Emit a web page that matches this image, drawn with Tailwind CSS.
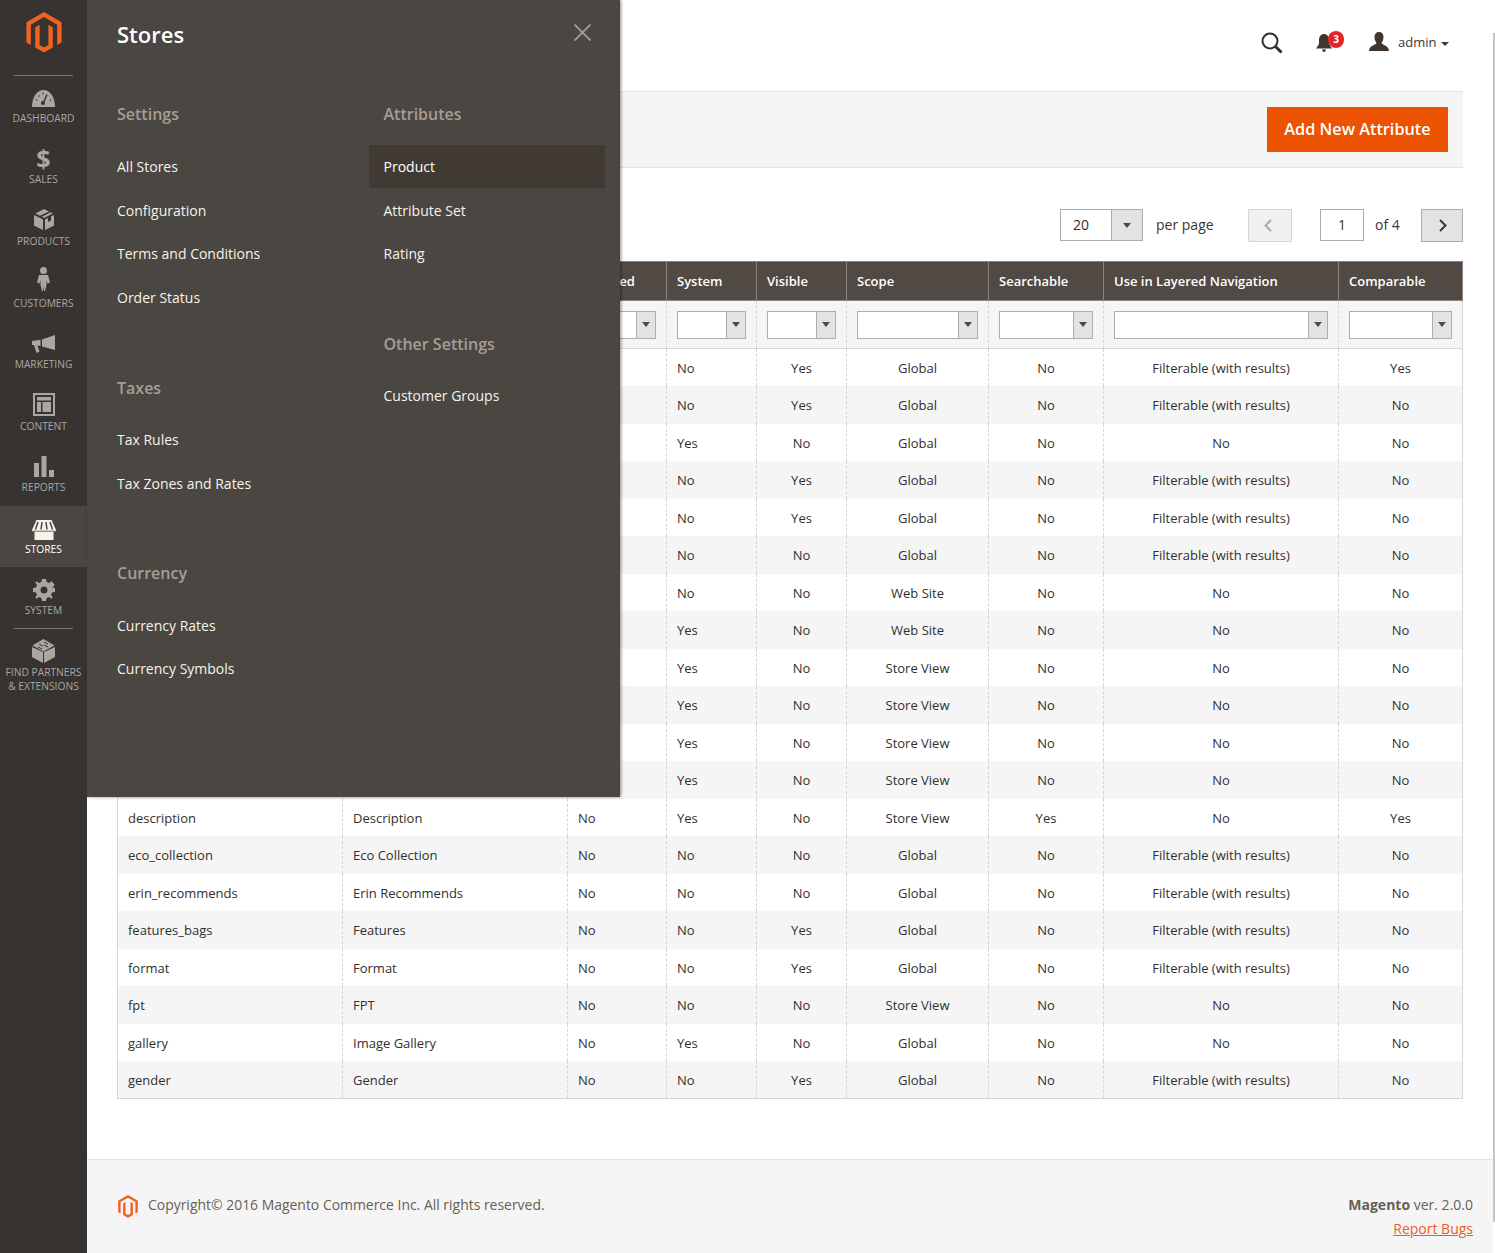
<!DOCTYPE html>
<html lang="en">
<head>
  <meta charset="UTF-8">
  <title>Product Attributes</title>
  <script src="https://cdn.jsdelivr.net/npm/@tailwindcss/browser@4"></script>
</head>
<body class="relative flex w-[1495px] h-[1253px] overflow-hidden bg-white text-[#303030] font-['Open_Sans',sans-serif]">

  <!-- Sidebar -->
  <nav class="w-[87px] shrink-0 bg-[#373330] text-[10.25px] leading-[14px] uppercase text-[#aaa6a0] text-center">
    <div class="h-[75px] flex justify-center pt-[12px]">
      <svg class="w-[36px] h-[41px]" viewBox="0 0 36 42" fill="#f26322"><path d="M18 0L36 10.4V31.2L31.5 33.8V13L18 5.2L4.5 13V33.8L0 31.2V10.4Z"/><path d="M18 41.6L9 36.4V15.6L13.5 13V33.8L18 36.4L22.5 33.8V13L27 15.6V36.4Z"/></svg>
    </div>
    <div class="h-px mx-[14px] bg-[#7d7873]"></div>
    <a class="flex flex-col items-center h-[61.2px]">
      <div class="h-[28px] mt-[7px] flex items-center"><svg class="w-[23px] h-[17px] mt-[2px]" viewBox="0 0 23 17" fill="currentColor"><path d="M0 17C0 7 5 0 11.500 0S23 7 23 17Z"/><path d="M15 4.500L11.500 12.500" stroke="#373330" stroke-width="1.500"/><circle cx="11" cy="13" r="2" fill="#373330"/><circle cx="4.500" cy="10" r="0.800" fill="#373330"/><circle cx="7" cy="6" r="0.800" fill="#373330"/><circle cx="11" cy="3.500" r="0.800" fill="#373330"/><circle cx="18.500" cy="10" r="0.800" fill="#373330"/></svg></div>
      <span>Dashboard</span>
    </a>
    <a class="flex flex-col items-center h-[61.4px]">
      <div class="h-[28px] mt-[7px] flex items-center font-bold text-[25px] leading-none">$</div>
      <span>Sales</span>
    </a>
    <a class="flex flex-col items-center h-[61.4px]">
      <div class="h-[28px] mt-[7px] flex items-center"><svg class="w-[20px] h-[21px]" viewBox="0 0 20 21" fill="currentColor"><path d="M10 0L15 2.400L6 6.800L1.500 4.500Z"/><path d="M16.800 3.300L18.800 4.500L10 9L7.800 7.800Z"/><path d="M0 6L9 10.500V21L0 16.500Z"/><path d="M20 6V16.500L11 21V10.500L14 9V13L17 11.500V7.500Z"/></svg></div>
      <span>Products</span>
    </a>
    <a class="flex flex-col items-center h-[61.4px]">
      <div class="h-[28px] mt-[8px] flex items-center"><svg class="w-[13px] h-[24px] -mt-[6px]" viewBox="0 0 13 24" fill="currentColor"><circle cx="6.500" cy="3.500" r="3.500"/><path d="M2 8H11L13 15.500L10.500 16.500L9.500 13V18L8 24H7L6.500 19L6 24H5L3.500 18V13L2.500 16.500L0 15.500Z"/></svg></div>
      <span>Customers</span>
    </a>
    <a class="flex flex-col items-center h-[61.4px]">
      <div class="h-[28px] mt-[8px] flex items-center"><svg class="w-[23px] h-[18px] mt-[2px]" viewBox="0 0 23 18" fill="currentColor"><path d="M23 0V15L10 11.500V4.500Z"/><path d="M0 6L8.500 4.800V11L5.500 10.600L7.500 16.500L4.500 18L2 10H0Z"/></svg></div>
      <span>Marketing</span>
    </a>
    <a class="flex flex-col items-center h-[61.4px]">
      <div class="h-[28px] mt-[8px] flex items-center"><svg class="w-[22px] h-[23px]" viewBox="0 0 22 23" fill="currentColor"><path fill-rule="evenodd" d="M0 0H22V23H0ZM2 2V21H20V2Z"/><path d="M4 4H18V7.500H4Z"/><path d="M4 9H8V19H4Z"/><path d="M9.500 9H18V19H9.500Z"/></svg></div>
      <span>Content</span>
    </a>
    <a class="flex flex-col items-center h-[61.4px]">
      <div class="h-[28px] mt-[8px] flex items-center"><svg class="w-[20px] h-[21px]" viewBox="0 0 20 21" fill="currentColor"><path d="M0 7H5V21H0Z"/><path d="M7.500 0H12.500V21H7.500Z"/><path d="M15 14H20V21H15Z"/></svg></div>
      <span>Reports</span>
    </a>
    <a class="flex flex-col items-center h-[61.4px] bg-[#4a4641] text-white">
      <div class="h-[28px] mt-[8px] flex items-center"><svg class="w-[24px] h-[20px] mt-[5px]" viewBox="0 0 24 20" fill="#f7f3eb"><path d="M4.500 0H19.500L24 10C24 11.500 22.500 12 21.500 11.500V20H2.500V11.500C1.500 12 0 11.500 0 10Z"/><path d="M6 2L3.500 9.500M10 2L9 9.500M14 2L15 9.500M18 2L20.500 9.500" stroke="#4a4641" stroke-width="1.500"/><path d="M1 11.200H23" stroke="#4a4641" stroke-width="0.800"/></svg></div>
      <span>Stores</span>
    </a>
    <a class="flex flex-col items-center h-[61.2px]">
      <div class="h-[28px] mt-[8px] flex items-center"><svg class="w-[22px] h-[22px] mt-[2px]" viewBox="0 0 22 22" fill="currentColor"><path fill-rule="evenodd" d="M9 0H13L13.600 3L16 4L18.600 2.300L19.700 3.400L21.700 5.400L20 8L19 8.400L22 9V13L19 13.600L18 16L19.700 18.600L18.600 19.700L16 18L13.600 19L13 22H9L8.400 19L6 18L3.400 19.700L2.300 18.600L4 16L3 13.600L0 13V9L3 8.400L4 6L2.300 3.400L3.400 2.300L6 4L8.400 3ZM11 7.500A3.500 3.500 0 1 0 11 14.500A3.500 3.500 0 1 0 11 7.500Z"/></svg></div>
      <span>System</span>
    </a>
    <div class="h-px mx-[14px] bg-[#7d7873]"></div>
    <a class="flex flex-col items-center">
      <div class="h-[28px] mt-[8px] flex items-center"><svg class="w-[23px] h-[24px]" viewBox="0 0 23 24" fill="currentColor"><path d="M0 8V18L11 24V13Z"/><path d="M23 8V18L12 24V13Z"/><path d="M11.500 0L22.500 6.500L11.500 12.500L0.500 6.500Z"/><path d="M7 5L11 7M12 3L16 5M6 8L10 10M12 6L16 8" stroke="#373330" stroke-width="1"/></svg></div>
      <span class="whitespace-nowrap">Find Partners</span>
      <span class="whitespace-nowrap">&amp; Extensions</span>
    </a>
  </nav>

  <!-- Main column -->
  <div class="flex-1 min-w-0 flex flex-col">
    <div class="flex-1 pl-[30px] pr-[32px]">
      <header class="relative h-[92px] border-b border-[#e3e3e3] text-[13px] text-[#41362f]">
        <svg class="absolute left-[1144px] top-[32px] w-[22px] h-[22px]" viewBox="0 0 22 22" fill="none" stroke="#303030" stroke-width="2"><circle cx="9" cy="9" r="7.500"/><path d="M14.500 14.500L20.500 20.500" stroke-width="3"/></svg>
        <svg class="absolute left-[1199px] top-[34px] w-[16px] h-[18px]" viewBox="0 0 16 18" fill="#41362f"><path d="M8 0C11 0 13 2.500 13 6V10L16 14.500H0L3 10V6C3 2.500 5 0 8 0Z"/><path d="M6 15.500H10C10 17 9 18 8 18S6 17 6 15.500Z"/></svg>
        <span class="absolute left-[1211px] top-[31px] w-[16px] h-[17px] rounded-full bg-[#e22626] text-white text-[10px] font-bold leading-[17px] text-center">3</span>
        <svg class="absolute left-[1252px] top-[32px] w-[20px] h-[19px]" viewBox="0 0 20 19" fill="#41362f"><path d="M10 0C13 0 14.500 2 14.500 5C14.500 7.500 13.500 9.500 12.500 11C13 13 20 13.500 20 19H0C0 13.500 7 13 7.500 11C6.500 9.500 5.500 7.500 5.500 5C5.500 2 7 0 10 0Z"/></svg>
        <span class="absolute left-[1281px] top-[32px] text-[13px] leading-[20px]">admin</span>
        <span class="absolute left-[1324px] top-[42px] w-0 h-0 border-x-[4px] border-x-transparent border-t-[4px] border-t-[#41362f]"></span>
      </header>

      <div class="h-[76px] bg-[#f5f5f5] border-b border-[#e3e3e3] flex items-start justify-end pr-[15px] pt-[15px]">
        <button class="h-[45px] w-[181px] pb-[1px] bg-[#eb5202] text-white text-[16.3px] font-semibold">Add New Attribute</button>
      </div>

      <!-- Pager -->
      <div class="h-[93px] pt-[41px] flex items-start justify-end text-[14px] text-[#41362f]">
        <div class="flex w-[83px] h-[32px] border border-[#adadad]">
          <span class="w-[50px] pl-[12px] leading-[30px] text-[#303030]">20</span>
          <span class="flex-1 bg-[#e3e3e3] border-l border-[#adadad] flex items-center justify-center"><i class="w-0 h-0 border-x-[4px] border-x-transparent border-t-[5px] border-t-[#514943]"></i></span>
        </div>
        <span class="ml-[13px] w-[92px] leading-[32px]">per page</span>
        <span class="w-[44px] h-[33px] pr-[4px] bg-[#f0f0f0] border border-[#d6d6d6] flex items-center justify-center">
          <svg class="w-[8px] h-[13px]" viewBox="0 0 8 13" fill="none" stroke="#a9a9a9" stroke-width="2"><path d="M7 1L1.500 6.500L7 12"/></svg>
        </span>
        <span class="ml-[28px] w-[44px] h-[32px] border border-[#adadad] text-center leading-[30px]">1</span>
        <span class="ml-[11px] w-[46px] leading-[32px]">of 4</span>
        <span class="w-[42px] h-[33px] pl-[2px] bg-[#e3e3e3] border border-[#adadad] flex items-center justify-center">
          <svg class="w-[8px] h-[13px]" viewBox="0 0 8 13" fill="none" stroke="#41362f" stroke-width="2"><path d="M1 1L6.500 6.500L1 12"/></svg>
        </span>
      </div>

      <!-- Attribute grid -->
      <table class="w-[1345px] table-fixed border-collapse text-[13px]">
        <thead>
          <tr class="h-[39px] bg-[#514943] text-white text-left font-semibold">
            <th class="w-[225px] px-[10px] pt-[2px] border border-[#8a837f] font-semibold"></th>
            <th class="w-[225px] px-[10px] pt-[2px] border border-[#8a837f] font-semibold"></th>
            <th class="w-[99px] px-[10px] pt-[2px] border border-[#8a837f] font-semibold">Required</th>
            <th class="w-[90px] px-[10px] pt-[2px] border border-[#8a837f] font-semibold">System</th>
            <th class="w-[90px] px-[10px] pt-[2px] border border-[#8a837f] font-semibold">Visible</th>
            <th class="w-[142px] px-[10px] pt-[2px] border border-[#8a837f] font-semibold">Scope</th>
            <th class="w-[115px] px-[10px] pt-[2px] border border-[#8a837f] font-semibold">Searchable</th>
            <th class="w-[235px] px-[10px] pt-[2px] border border-[#8a837f] font-semibold">Use in Layered Navigation</th>
            <th class="w-[124px] px-[10px] pt-[2px] border border-[#8a837f] font-semibold">Comparable</th>
          </tr>
        </thead>
        <tbody id="grid"></tbody>
      </table>
    </div>

    <!-- Footer -->
    <footer class="h-[94px] mr-[2px] bg-[#f5f5f5] border-t border-[#e3e3e3] pl-[31px] pr-[20px] pt-[33px] flex justify-between text-[14px] text-[#676056]">
      <div class="flex items-start">
        <svg class="w-[20px] h-[23px] mt-[2px]" viewBox="0 0 36 42" fill="#f26322"><path d="M18 0L36 10.4V31.2L31.5 33.8V13L18 5.2L4.5 13V33.8L0 31.2V10.4Z"/><path d="M18 41.6L9 36.4V15.6L13.5 13V33.8L18 36.4L22.5 33.8V13L27 15.6V36.4Z"/></svg>
        <span class="ml-[10px] text-[13.95px] leading-[24px]">Copyright© 2016 Magento Commerce Inc. All rights reserved.</span>
      </div>
      <div class="text-right leading-[24px]">
        <div><b class="font-bold">Magento</b> ver. 2.0.0</div>
        <a class="text-[#ef5a2a] underline">Report Bugs</a>
      </div>
    </footer>
  </div>

  <!-- Scrollbar thumb -->
  <div class="absolute left-[1493px] top-[33px] w-[2px] h-[1189px] bg-[#c4c4c4]"></div>

  <!-- Stores flyout -->
  <aside class="absolute left-[87px] top-0 w-[533px] h-[797px] bg-[#4a4641] shadow-[1px_0_3px_rgba(0,0,0,0.45)] text-[14px] text-[#f7f3eb]">
    <h1 class="h-[99px] pl-[30px] pt-[17px] text-[22px] leading-[34px] font-semibold text-white">Stores</h1>
    <svg class="absolute left-[487px] top-[24px] w-[17px] h-[17px]" viewBox="0 0 17 17" fill="none" stroke="#a79d95" stroke-width="1.800"><path d="M0.500 0.500L16.500 16.500M16.500 0.500L0.500 16.500"/></svg>
    <div class="flex pl-[15px] gap-[31px]">
      <div class="w-[236px] flex flex-col gap-[53px]">
        <section>
          <h2 class="h-[30px] mb-[16px] pl-[15px] text-[16px] leading-[30px] font-semibold text-[#a79d95]">Settings</h2>
          <a class="block h-[43.5px] pl-[15px] leading-[43.5px]">All Stores</a>
          <a class="block h-[43.5px] pl-[15px] leading-[43.5px]">Configuration</a>
          <a class="block h-[43.5px] pl-[15px] leading-[43.5px]">Terms and Conditions</a>
          <a class="block h-[43.5px] pl-[15px] leading-[43.5px]">Order Status</a>
        </section>
        <section>
          <h2 class="h-[30px] mt-[1px] mb-[15px] pl-[15px] text-[16px] leading-[30px] font-semibold text-[#a79d95]">Taxes</h2>
          <a class="block h-[43.5px] pl-[15px] leading-[43.5px]">Tax Rules</a>
          <a class="block h-[43.5px] pl-[15px] leading-[43.5px]">Tax Zones and Rates</a>
        </section>
        <section>
          <h2 class="h-[30px] mb-[15.7px] pl-[15px] text-[16px] leading-[30px] font-semibold text-[#a79d95]">Currency</h2>
          <a class="block h-[43.5px] pl-[15px] leading-[43.5px]">Currency Rates</a>
          <a class="block h-[43.5px] pl-[15px] leading-[43.5px]">Currency Symbols</a>
        </section>
      </div>
      <div class="w-[236px] flex flex-col gap-[53px]">
        <section>
          <h2 class="h-[30px] mb-[16px] pl-[14.5px] text-[16px] leading-[30px] font-semibold text-[#a79d95]">Attributes</h2>
          <a class="block h-[43px] pl-[14.5px] leading-[43.5px] bg-[#403934] text-white">Product</a>
          <a class="block h-[43.5px] pl-[14.5px] leading-[46px]">Attribute Set</a>
          <a class="block h-[44px] pl-[14.5px] leading-[43.5px]">Rating</a>
        </section>
        <section>
          <h2 class="h-[30px] mb-[15.5px] pl-[14.5px] text-[16px] leading-[30px] font-semibold text-[#a79d95]">Other Settings</h2>
          <a class="block h-[43.5px] pl-[14.5px] leading-[43.5px]">Customer Groups</a>
        </section>
      </div>
    </div>
  </aside>

  <script>
    const F = 'Filterable (with results)';
    // code, label, required, system, visible, scope, searchable, layered, comparable
    const rows = [
      ['', '', '', 'No', 'Yes', 'Global', 'No', F, 'Yes'],
      ['', '', '', 'No', 'Yes', 'Global', 'No', F, 'No'],
      ['', '', '', 'Yes', 'No', 'Global', 'No', 'No', 'No'],
      ['', '', '', 'No', 'Yes', 'Global', 'No', F, 'No'],
      ['', '', '', 'No', 'Yes', 'Global', 'No', F, 'No'],
      ['', '', '', 'No', 'No', 'Global', 'No', F, 'No'],
      ['', '', '', 'No', 'No', 'Web Site', 'No', 'No', 'No'],
      ['', '', '', 'Yes', 'No', 'Web Site', 'No', 'No', 'No'],
      ['', '', '', 'Yes', 'No', 'Store View', 'No', 'No', 'No'],
      ['', '', '', 'Yes', 'No', 'Store View', 'No', 'No', 'No'],
      ['', '', '', 'Yes', 'No', 'Store View', 'No', 'No', 'No'],
      ['', '', '', 'Yes', 'No', 'Store View', 'No', 'No', 'No'],
      ['description', 'Description', 'No', 'Yes', 'No', 'Store View', 'Yes', 'No', 'Yes'],
      ['eco_collection', 'Eco Collection', 'No', 'No', 'No', 'Global', 'No', F, 'No'],
      ['erin_recommends', 'Erin Recommends', 'No', 'No', 'No', 'Global', 'No', F, 'No'],
      ['features_bags', 'Features', 'No', 'No', 'Yes', 'Global', 'No', F, 'No'],
      ['format', 'Format', 'No', 'No', 'Yes', 'Global', 'No', F, 'No'],
      ['fpt', 'FPT', 'No', 'No', 'No', 'Store View', 'No', 'No', 'No'],
      ['gallery', 'Image Gallery', 'No', 'Yes', 'No', 'Global', 'No', 'No', 'No'],
      ['gender', 'Gender', 'No', 'No', 'Yes', 'Global', 'No', F, 'No'],
    ];
    const grid = document.getElementById('grid');
    const arrow = '<span class="w-[19px] bg-[#e3e3e3] border-l border-[#adadad] flex items-center justify-center"><i class="w-0 h-0 border-x-[4px] border-x-transparent border-t-[5px] border-t-[#514943]"></i></span>';
    const select = '<div class="flex justify-end h-[28px] bg-white border border-[#adadad]">' + arrow + '</div>';
    // outer edges of the grid are solid, inner separators dashed
    const edge = (i) => i === 0 ? 'border-x border-dashed border-[#d6d6d6] [border-left-style:solid]'
      : i === 8 ? 'border-x border-dashed border-[#d6d6d6] [border-right-style:solid]'
      : 'border-x border-dashed border-[#d6d6d6]';
    let html = '<tr class="h-[48px] bg-[#f5f5f5] border-b border-[#d6d6d6]">';
    for (let i = 0; i < 9; i++) html += '<td class="px-[10px] ' + edge(i) + '">' + select + '</td>';
    html += '</tr>';
    rows.forEach((r, n) => {
      const last = n === rows.length - 1 ? ' border-b border-[#d6d6d6]' : '';
      html += '<tr class="' + (n % 2 ? 'h-[37.5px] bg-[#f5f5f5]' : 'h-[37.5px] bg-white') + last + '">';
      r.forEach((c, i) => {
        const align = i < 4 ? 'text-left' : 'text-center';
        html += '<td class="p-0 pt-[2.8px] px-[10px] ' + edge(i) + ' ' + align + '">' + c + '</td>';
      });
      html += '</tr>';
    });
    grid.innerHTML = html;
  </script>
</body>
</html>
